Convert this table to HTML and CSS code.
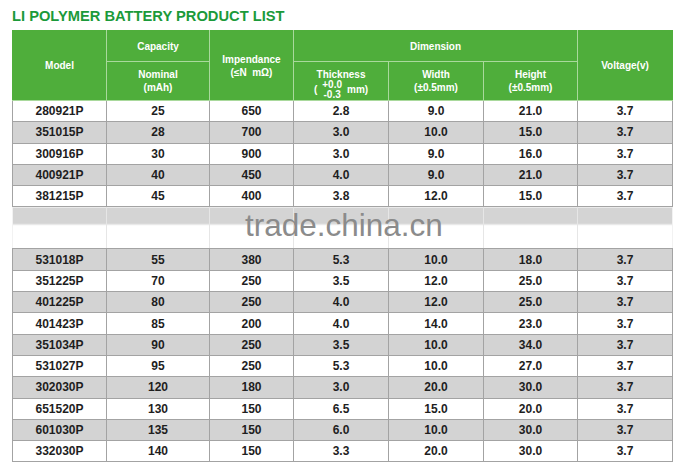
FILE: index.html
```html
<!DOCTYPE html>
<html>
<head>
<meta charset="utf-8">
<link rel="stylesheet" href="styles.css">
</head>
<body>
<div class="page">
  <h1 class="title">LI POLYMER BATTERY PRODUCT LIST</h1>
  <div class="wrap">
    <table class="list">
      <colgroup>
        <col class="c1"><col class="c2"><col class="c3"><col class="c4"><col class="c5"><col class="c6"><col class="c7">
      </colgroup>
      <thead>
        <tr class="h1">
          <th rowspan="2">Model</th>
          <th>Capacity</th>
          <th rowspan="2">Impendance<br>(≤N&nbsp;&nbsp;mΩ)</th>
          <th colspan="3">Dimension</th>
          <th rowspan="2">Voltage(v)</th>
        </tr>
        <tr class="h2">
          <th>Nominal<br>(mAh)</th>
          <th class="thick"><div>Thickness</div><div class="tol"><span>(</span><span class="stack"><span>+0.0</span><span>-0.3</span></span><span>mm)</span></div></th>
          <th>Width<br>(±0.5mm)</th>
          <th>Height<br>(±0.5mm)</th>
        </tr>
      </thead>
      <tbody>
        <tr><td>280921P</td><td>25</td><td>650</td><td>2.8</td><td>9.0</td><td>21.0</td><td>3.7</td></tr>
        <tr class="g"><td>351015P</td><td>28</td><td>700</td><td>3.0</td><td>10.0</td><td>15.0</td><td>3.7</td></tr>
        <tr><td>300916P</td><td>30</td><td>900</td><td>3.0</td><td>9.0</td><td>16.0</td><td>3.7</td></tr>
        <tr class="g"><td>400921P</td><td>40</td><td>450</td><td>4.0</td><td>9.0</td><td>21.0</td><td>3.7</td></tr>
        <tr><td>381215P</td><td>45</td><td>400</td><td>3.8</td><td>12.0</td><td>15.0</td><td>3.7</td></tr>
        <tr class="gap"><td></td><td></td><td></td><td></td><td></td><td></td><td></td></tr>
        <tr class="g"><td>531018P</td><td>55</td><td>380</td><td>5.3</td><td>10.0</td><td>18.0</td><td>3.7</td></tr>
        <tr><td>351225P</td><td>70</td><td>250</td><td>3.5</td><td>12.0</td><td>25.0</td><td>3.7</td></tr>
        <tr class="g"><td>401225P</td><td>80</td><td>250</td><td>4.0</td><td>12.0</td><td>25.0</td><td>3.7</td></tr>
        <tr><td>401423P</td><td>85</td><td>200</td><td>4.0</td><td>14.0</td><td>23.0</td><td>3.7</td></tr>
        <tr class="g"><td>351034P</td><td>90</td><td>250</td><td>3.5</td><td>10.0</td><td>34.0</td><td>3.7</td></tr>
        <tr><td>531027P</td><td>95</td><td>250</td><td>5.3</td><td>10.0</td><td>27.0</td><td>3.7</td></tr>
        <tr class="g"><td>302030P</td><td>120</td><td>180</td><td>3.0</td><td>20.0</td><td>30.0</td><td>3.7</td></tr>
        <tr><td>651520P</td><td>130</td><td>150</td><td>6.5</td><td>15.0</td><td>20.0</td><td>3.7</td></tr>
        <tr class="g"><td>601030P</td><td>135</td><td>150</td><td>6.0</td><td>10.0</td><td>30.0</td><td>3.7</td></tr>
        <tr><td>332030P</td><td>140</td><td>150</td><td>3.3</td><td>20.0</td><td>30.0</td><td>3.7</td></tr>
      </tbody>
    </table>
    <div class="mark">trade.china.cn</div>
  </div>
</div>
</body>
</html>
```
FILE: styles.css
```css
html, body {
  margin: 0;
  padding: 0;
  background: #fff;
}
.page {
  padding: 8px 0 0 12px;
  font-family: "Liberation Sans", Arial, sans-serif;
}
.title {
  margin: 0 0 6px 0;
  font-size: 14.7px;
  line-height: 16px;
  font-weight: 700;
  color: #1b9a3a;
  letter-spacing: 0;
}
.wrap {
  position: relative;
  width: 660px;
}
.list {
  border-collapse: collapse;
  table-layout: fixed;
  width: 660px;
}
.c1 { width: 94px; }
.c2 { width: 103px; }
.c3 { width: 84px; }
.c4 { width: 95px; }
.c5 { width: 95px; }
.c6 { width: 94px; }
.c7 { width: 95px; }

.list th {
  background: #4fae3b;
  color: #fff;
  font-size: 10px;
  font-weight: 700;
  line-height: 13px;
  border: 1px solid #a9d99c;
  padding: 0;
  text-align: center;
  vertical-align: middle;
}
.list thead th:first-child { border-left-color: #4fae3b; }
.list thead tr.h1 th:last-child { border-right-color: #4fae3b; }
.list thead tr.h1 th { border-top-color: #4fae3b; }
.h1 { height: 31px; }
.h2 { height: 39px; }
.list th.thick {
  vertical-align: top;
  padding-top: 7px;
  line-height: 11px;
}
.tol {
  display: flex;
  justify-content: center;
  align-items: center;
  gap: 5px;
  line-height: 10px;
  margin-top: 0;
}
.stack {
  display: flex;
  flex-direction: column;
  align-items: center;
}
.list td {
  height: 20.3px;
  padding: 0;
  border: 1px solid #a3a3a3;
  text-align: center;
  vertical-align: middle;
  font-size: 12px;
  font-weight: 700;
  color: #1e1e1e;
  background: #fff;
}
.list tr.g td { background: #d3d3d3; }
.list tr.gap td {
  height: 41px;
  background: linear-gradient(#d4d4d4 0, #d4d4d4 16px, #fff 18px);
  border-left-color: #e6e6e6;
  border-right-color: #e6e6e6;
}
.list tr.gap td:first-child { border-left-color: #f2f2f2; }
.list tr.gap td:last-child { border-right-color: #f2f2f2; }
.mark {
  position: absolute;
  left: 233px;
  top: 179px;
  font-size: 31.5px;
  line-height: 32px;
  color: #8b8b8b;
  font-weight: 400;
  white-space: nowrap;
}
```
